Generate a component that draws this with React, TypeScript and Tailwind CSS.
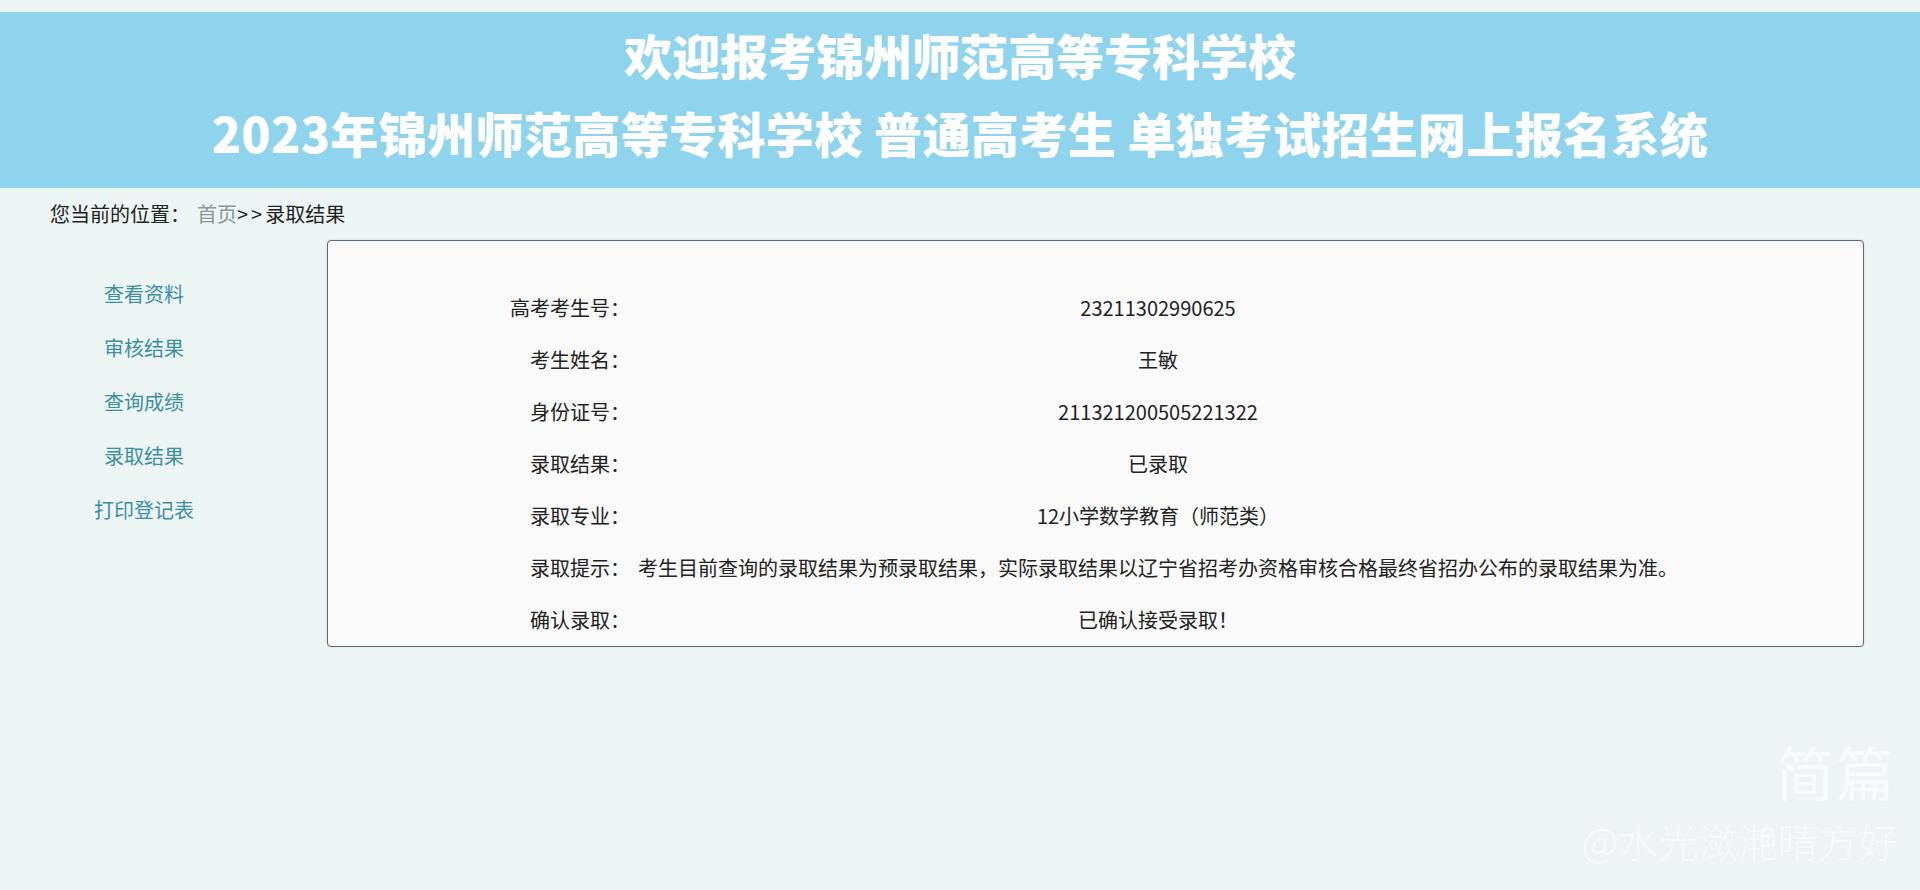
import React from "react";

const rows: { label: string; value: string }[] = [
  { label: "高考考生号", value: "23211302990625" },
  { label: "考生姓名", value: "王敏" },
  { label: "身份证号", value: "211321200505221322" },
  { label: "录取结果", value: "已录取" },
  { label: "录取专业", value: "12小学数学教育（师范类）" },
  {
    label: "录取提示",
    value:
      "考生目前查询的录取结果为预录取结果，实际录取结果以辽宁省招考办资格审核合格最终省招办公布的录取结果为准。",
  },
  { label: "确认录取", value: "已确认接受录取！" },
];

const menu = ["查看资料", "审核结果", "查询成绩", "录取结果", "打印登记表"];

export default function App() {
  return (
    <div
      className="relative min-h-[890px] w-full overflow-hidden bg-[#edf5f4] text-[#222]"
      style={{ fontFamily: '"Noto Sans CJK SC", "Noto Sans", sans-serif' }}
    >
      <div className="h-[12px]" />
      <header className="flex h-[176px] flex-col items-center bg-[#8fd4ec] text-white">
        <div className="mt-[14px] text-[48px] font-black leading-[56px]">
          欢迎报考锦州师范高等专科学校
        </div>
        <div className="mt-[22px] text-[48px] font-black leading-[56px] tracking-[0.4px]">
          2023年锦州师范高等专科学校 普通高考生 单独考试招生网上报名系统
        </div>
      </header>

      <div className="flex h-[52px] items-center pl-[50px] text-[20px] leading-none">
        <span>您当前的位置：</span>
        <span className="ml-[7px] text-[#8a9797]">首页</span>
        <span className="tracking-[3px]">&gt;&gt;</span>
        <span>录取结果</span>
      </div>

      <div className="flex">
        <nav className="flex w-[288px] shrink-0 flex-col items-center pt-[27px]">
          {menu.map((m) => (
            <div key={m} className="h-[54px] text-[20px] leading-[54px] text-[#3b8fa3]">
              {m}
            </div>
          ))}
        </nav>

        <div className="ml-[39px] w-[1537px] rounded-[4px] border border-[#5f6c78] bg-[#fafafa] pt-[41px] shadow-[0_0_2px_rgba(0,0,0,0.15)]">
          <table className="w-full table-fixed border-collapse text-[20px]">
            <colgroup>
              <col className="w-[302px]" />
              <col className="w-[1056px]" />
              <col />
            </colgroup>
            <tbody>
              {rows.map((r) => (
                <tr key={r.label} className="h-[52px]">
                  <td className="whitespace-nowrap text-right align-middle">
                    {r.label}：
                  </td>
                  <td className="whitespace-nowrap text-center align-middle">
                    {r.value}
                  </td>
                  <td />
                </tr>
              ))}
            </tbody>
          </table>
        </div>
      </div>

      <div className="pointer-events-none absolute right-[24px] top-[742px] text-[58px] font-normal leading-none tracking-[2px] text-white/60">
        简篇
      </div>
      <div className="pointer-events-none absolute right-[22px] top-[820px] text-[40px] font-light leading-none text-white/60">
        @水光潋滟晴方好
      </div>
    </div>
  );
}
